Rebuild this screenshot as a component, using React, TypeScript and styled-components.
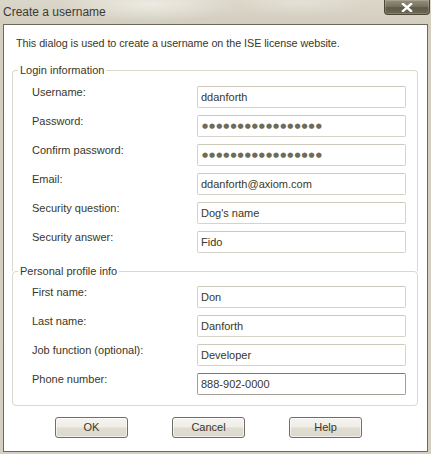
import React from "react";
import styled, { createGlobalStyle } from "styled-components";

const Global = createGlobalStyle`
  html, body { margin: 0; padding: 0; }
  body {
    background: #d4cfc0;
    overflow: hidden;
    font-family: "Liberation Sans", Arial, sans-serif;
  }
`;

const Window = styled.div`
  width: 431px;
  height: 454px;
  display: flex;
  flex-direction: column;
  box-sizing: border-box;
  padding: 0 3px 2px 3px;
  background:
    radial-gradient(ellipse 90px 18px at 150px 4px, rgba(240, 238, 230, 0.85), rgba(240, 238, 230, 0) 100%),
    radial-gradient(ellipse 70px 14px at 300px 2px, rgba(232, 229, 219, 0.7), rgba(232, 229, 219, 0) 100%),
    linear-gradient(#dad6c9, #d3cebf 24px, #d4cfc0);
`;

const TitleBar = styled.div`
  height: 24px;
  display: flex;
  align-items: flex-start;
  flex: none;
`;

const Title = styled.div`
  font-family: "Liberation Sans", Arial, sans-serif;
  font-size: 12px;
  line-height: 24px;
  color: #3b3b38;
`;

const CloseButton = styled.div`
  margin-left: auto;
  margin-right: -2px;
  width: 46px;
  height: 15px;
  box-sizing: border-box;
  border: 1px solid #4b4637;
  border-top: none;
  border-radius: 0 0 4px 4px;
  background: linear-gradient(#958e79, #7a7360 45%, #5f594a 55%, #6d6753);
  box-shadow: inset 0 0 0 1px rgba(255, 255, 255, 0.18);
  display: flex;
  align-items: center;
  justify-content: center;
`;

const Client = styled.div`
  flex: 1;
  background: #ffffff;
  border: 1px solid #6c685a;
  display: flex;
  flex-direction: column;
  padding: 0 9px 0 8px;
  color: #3a3728;
  font-size: 11px;
`;

const Intro = styled.p`
  margin: 12px 0 0 4px;
  line-height: 13px;
  font-size: 10.8px;
  letter-spacing: -0.05px;
`;

const Group = styled.div<{ $last?: boolean }>`
  position: relative;
  border: 1px solid #dbd8cc;
  border-radius: ${(p) => (p.$last ? "4px" : "4px 4px 0 0")};
  border-bottom: ${(p) => (p.$last ? "1px solid #dbd8cc" : "none")};
  margin-top: ${(p) => (p.$last ? "0" : "20px")};
  padding: ${(p) => (p.$last ? "14px 11px 10px 19px" : "15px 11px 18px 19px")};
  display: grid;
  grid-template-columns: 1fr 209px;
  row-gap: 7px;
`;

const Legend = styled.span`
  position: absolute;
  left: 5px;
  top: -7px;
  padding: 0 2px;
  background: #ffffff;
  line-height: 13px;
  font-size: 11px;
`;

const Label = styled.label`
  line-height: 13px;
  align-self: start;
`;

const Field = styled.div<{ $focused?: boolean }>`
  height: 22px;
  box-sizing: border-box;
  border: 1px solid ${(p) => (p.$focused ? "#a3a093" : "#d6d3c8")};
  border-top-color: ${(p) => (p.$focused ? "#7b786c" : "#cdc9bd")};
  border-radius: 2px;
  padding: 0 3px;
  display: flex;
  align-items: center;
  font-size: 11px;
  color: #3a3728;
  white-space: nowrap;
`;

const Dots = styled.span`
  font-family: "DejaVu Sans", sans-serif;
  font-size: 7px;
  letter-spacing: 1px;
  color: #6e6b58;
  padding-left: 1px;
`;

const ButtonRow = styled.div`
  display: flex;
  gap: 44px;
  padding-left: 43px;
  margin-top: 11px;
`;

const Button = styled.button`
  width: 73px;
  height: 21px;
  box-sizing: border-box;
  border: 1px solid #706f67;
  border-radius: 3px;
  background: linear-gradient(#f5f4ef, #efede6 45%, #e0dcd1 55%, #dcd8cc);
  box-shadow: inset 0 0 0 1px rgba(255, 255, 255, 0.6);
  font-family: "Liberation Sans", Arial, sans-serif;
  font-size: 11px;
  color: #3a3728;
  padding: 0;
  line-height: 19px;
`;

type Row = { label: string; value: string; secret?: boolean; focused?: boolean };

const login: Row[] = [
  { label: "Username:", value: "ddanforth" },
  { label: "Password:", value: "", secret: true },
  { label: "Confirm password:", value: "", secret: true },
  { label: "Email:", value: "ddanforth@axiom.com" },
  { label: "Security question:", value: "Dog's name" },
  { label: "Security answer:", value: "Fido" },
];

const profile: Row[] = [
  { label: "First name:", value: "Don" },
  { label: "Last name:", value: "Danforth" },
  { label: "Job function (optional):", value: "Developer" },
  { label: "Phone number:", value: "888-902-0000", focused: true },
];

const Rows = ({ rows }: { rows: Row[] }) => (
  <>
    {rows.map((r) => (
      <React.Fragment key={r.label}>
        <Label>{r.label}</Label>
        <Field $focused={r.focused}>
          {r.secret ? <Dots>{"●".repeat(17)}</Dots> : r.value}
        </Field>
      </React.Fragment>
    ))}
  </>
);

export default function App() {
  return (
    <>
      <Global />
      <Window>
        <TitleBar>
          <Title>Create a username</Title>
          <CloseButton>
            <svg width="12" height="9" viewBox="0 0 12 9">
              <path d="M2 1 L10 8 M10 1 L2 8" stroke="#ffffff" strokeWidth="2.4" strokeLinecap="square" />
            </svg>
          </CloseButton>
        </TitleBar>
        <Client>
          <Intro>This dialog is used to create a username on the ISE license website.</Intro>
          <Group>
            <Legend>Login information</Legend>
            <Rows rows={login} />
          </Group>
          <Group $last>
            <Legend>Personal profile info</Legend>
            <Rows rows={profile} />
          </Group>
          <ButtonRow>
            <Button>OK</Button>
            <Button>Cancel</Button>
            <Button>Help</Button>
          </ButtonRow>
        </Client>
      </Window>
    </>
  );
}
